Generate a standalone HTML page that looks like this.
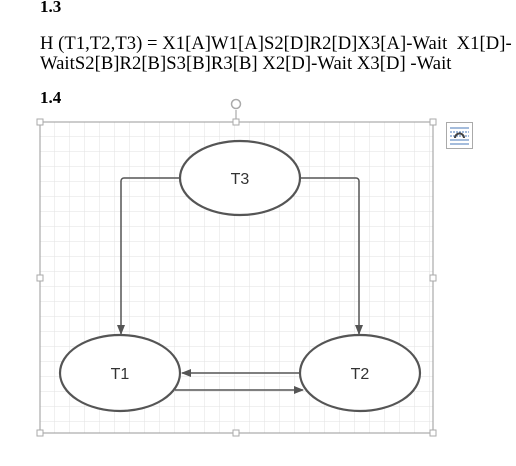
<!DOCTYPE html>
<html><head><style>
body{margin:0;width:516px;height:466px;background:#fff;overflow:hidden;position:relative;font-family:"Liberation Serif",serif;color:#000}
.t{position:absolute;left:40px;font-size:18.6px;white-space:nowrap}
</style></head><body>
<div class="t" style="top:-3px;font-weight:bold;font-size:17px">1.3</div>
<div class="t" style="top:34px;line-height:20px;letter-spacing:0.05px">H (T1,T2,T3) = X1[A]W1[A]S2[D]R2[D]X3[A]-Wait&nbsp; X1[D]-<br>WaitS2[B]R2[B]S3[B]R3[B] X2[D]-Wait X3[D] -Wait</div>
<div class="t" style="top:88px;font-weight:bold;font-size:17px">1.4</div>
<svg width="516" height="466" style="position:absolute;left:0;top:0">
<defs>
<pattern id="g" x="40" y="122" width="15" height="15" patternUnits="userSpaceOnUse">
<path d="M15 0V15M0 15H15" stroke="#e2e2e2" stroke-width="1" fill="none"/>
</pattern>
<marker id="a" markerWidth="10" markerHeight="8" refX="9" refY="4" orient="auto" markerUnits="userSpaceOnUse"><path d="M0 0L10 4L0 8z" fill="#555"/></marker>
</defs>
<rect x="40" y="122" width="393" height="311" fill="url(#g)" stroke="#999"/>
<line x1="236" y1="122" x2="236" y2="110" stroke="#999"/>
<circle cx="236" cy="104" r="4.5" fill="none" stroke="#aaa" stroke-width="1.5"/>
<g fill="#fff" stroke="#aaa">
<rect x="37" y="119" width="6" height="6"/><rect x="233" y="119" width="6" height="6"/><rect x="430" y="119" width="6" height="6"/>
<rect x="37" y="275" width="6" height="6"/><rect x="430" y="275" width="6" height="6"/>
<rect x="37" y="430" width="6" height="6"/><rect x="233" y="430" width="6" height="6"/><rect x="430" y="430" width="6" height="6"/>
</g>
<rect x="446.5" y="122.5" width="26" height="26" fill="#fff" stroke="#aaa"/>
<g stroke="#4a7ab8" stroke-width="1"><line x1="450" y1="128" x2="469" y2="128"/><line x1="450" y1="132" x2="469" y2="132" stroke-dasharray="2 1"/><line x1="450" y1="136" x2="469" y2="136" stroke-dasharray="2 1"/><line x1="450" y1="140" x2="469" y2="140"/><line x1="450" y1="144" x2="469" y2="144"/></g>
<path d="M455 138a4.5 4.5 0 0 1 9 0" fill="none" stroke="#444" stroke-width="2"/>
<g fill="none" stroke="#555" stroke-width="1.5">
<path d="M180 178H124a3 3 0 0 0-3 3V334" marker-end="url(#a)"/>
<path d="M299 178H356a3 3 0 0 1 3 3V334" marker-end="url(#a)"/>
<path d="M300 373H182" marker-end="url(#a)"/>
<path d="M175 390H303" marker-end="url(#a)"/>
</g>
<g fill="#fff" stroke="#555" stroke-width="2.2">
<ellipse cx="240" cy="178" rx="60" ry="37"/>
<ellipse cx="120" cy="373" rx="60" ry="38"/>
<ellipse cx="360" cy="373" rx="60" ry="38"/>
</g>
<g font-family="Liberation Sans,sans-serif" font-size="16" fill="#333" text-anchor="middle">
<text x="240" y="184">T3</text><text x="120" y="379">T1</text><text x="360" y="379">T2</text>
</g>
</svg>
</body></html>
